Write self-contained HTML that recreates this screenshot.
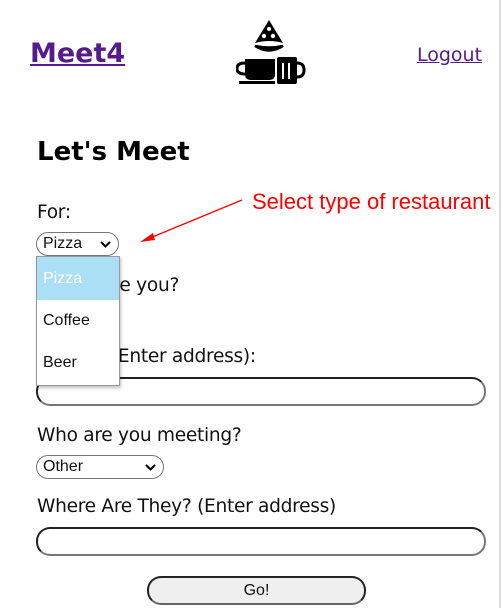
<!DOCTYPE html>
<html><head><style>
body{margin:0;width:502px;height:608px;background:#fff;position:relative;overflow:hidden;font-family:"DejaVu Sans","Liberation Sans",sans-serif;color:#111}
.a{position:absolute;white-space:nowrap}
.lbl{font-size:18.6px;letter-spacing:-0.3px}
.sel{position:absolute;border:1px solid #767676;border-radius:12px;background:#fff;font-family:"Liberation Sans",sans-serif;font-size:16px;box-sizing:border-box}
.sel svg{position:absolute;right:7px;top:8px}
.inp{position:absolute;left:36px;width:450px;height:29px;border:2px solid #222;border-bottom-color:#777;border-right-color:#777;border-radius:14px;box-sizing:border-box}
</style></head><body>
<div style="position:absolute;left:499px;top:0;width:2px;height:608px;background:#ddd"></div>
<div class="a" style="left:30px;top:38px;font-size:27px;font-weight:bold;color:#551a8b;text-decoration:underline;font-family:'DejaVu Sans',sans-serif">Meet4</div>
<div class="a" style="left:417px;top:44px;font-size:19px;color:#551a8b;text-decoration:underline">Logout</div>
<svg class="a" style="left:236px;top:18px" width="70" height="68" viewBox="0 0 70 68">
<path d="M33 2 L19 25 Q33 21 47 25 Z" fill="#000"/>
<circle cx="28" cy="18" r="2.2" fill="#fff"/><circle cx="37" cy="18" r="2.2" fill="#fff"/><circle cx="33" cy="11" r="2" fill="#fff"/>
<path d="M19 28 Q33 37 47 28 Q33 31 19 28 Z" fill="#000" stroke="#000" stroke-width="2.5"/>
<path d="M9 41 H39 V56 Q39 62 33 62 H15 Q9 62 9 56 Z" fill="#000"/>
<path d="M9 45 Q1 45 1 50.5 Q1 56 9 56" fill="none" stroke="#000" stroke-width="3"/>
<rect x="3" y="63" width="36" height="3" fill="#000"/>
<rect x="41" y="39" width="20" height="27" rx="2" fill="#000"/>
<path d="M61 45 Q68 45 68 52 Q68 59 61 59" fill="none" stroke="#000" stroke-width="3"/>
<rect x="46" y="45" width="2" height="16" fill="#fff"/><rect x="52" y="45" width="2" height="16" fill="#fff"/>
</svg>
<div class="a" style="left:37px;top:137px;font-size:26px;font-weight:bold;color:#000">Let's Meet</div>
<div class="a" style="left:252px;top:189px;font-size:22px;color:#f00;font-family:'Liberation Sans',sans-serif">Select type of restaurant</div>
<svg class="a" style="left:0;top:0" width="502" height="608"><line x1="242" y1="200" x2="150" y2="238" stroke="#f00" stroke-width="1.3"/><path d="M140 242 L153 233 L155 240 Z" fill="#f00"/></svg>
<div class="a lbl" style="left:37px;top:202px">For:</div>
<div class="sel" style="left:36px;top:232px;width:83px;height:24px;padding:2px 6px">Pizza<svg width="11" height="7" viewBox="0 0 11 7"><path d="M1 1 L5.5 5.5 L10 1" fill="none" stroke="#000" stroke-width="2"/></svg></div>
<div class="a lbl" style="left:37px;top:275px">Where are you?</div>
<div class="a lbl" style="left:37px;top:346px">Where? (Enter address):</div>
<div class="inp" style="top:377px"></div>
<div style="position:absolute;left:36px;top:256px;width:82px;height:128px;background:#fff;border:1px solid #999;box-shadow:1px 2px 3px rgba(0,0,0,.25);font-family:'Liberation Sans',sans-serif;font-size:16px">
<div style="height:43px;background:#abdff5;color:#fff;line-height:43px;padding-left:6px">Pizza</div>
<div style="height:42px;line-height:42px;padding-left:6px">Coffee</div>
<div style="height:42px;line-height:42px;padding-left:6px">Beer</div>
</div>
<div class="a lbl" style="left:37px;top:425px">Who are you meeting?</div>
<div class="sel" style="left:36px;top:455px;width:128px;height:24px;padding:2px 6px">Other<svg width="11" height="7" viewBox="0 0 11 7"><path d="M1 1 L5.5 5.5 L10 1" fill="none" stroke="#000" stroke-width="2"/></svg></div>
<div class="a lbl" style="left:37px;top:496px">Where Are They? (Enter address)</div>
<div class="inp" style="top:527px"></div>
<div style="position:absolute;left:147px;top:576px;width:219px;height:29px;box-sizing:border-box;border:2px solid #222;border-bottom-color:#666;border-radius:14px;background:#efefef;text-align:center;font-family:'Liberation Sans',sans-serif;font-size:16px;line-height:25px">Go!</div>
</body></html>
